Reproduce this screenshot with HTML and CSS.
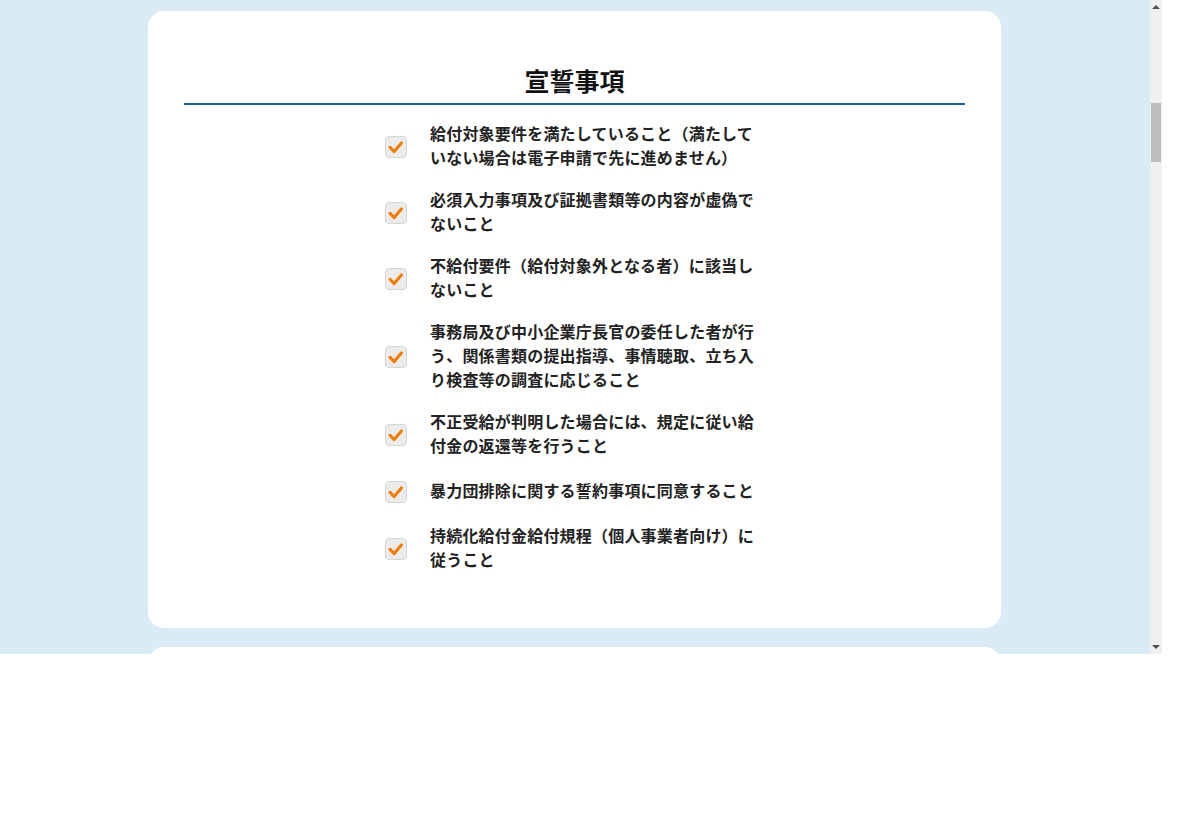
FILE: index.html
```html
<!DOCTYPE html>
<html lang="ja">
<head>
<meta charset="UTF-8" />
<meta name="viewport" content="width=device-width, initial-scale=1" />
<title>宣誓事項</title>
<link rel="stylesheet" href="styles.css">
</head>
<body>

<div class="window">
  <main class="viewport">
    <section class="card">
      <h2 class="card-title">宣誓事項</h2>

      <ul class="oath-list">
        <li class="oath-item">
          <span class="check"><svg viewBox="0 0 22 22" width="22" height="22"><path d="M4.5 11.5 L9 16 L17 6.5" /></svg></span>
          <span class="oath-text">給付対象要件を満たしていること（満たしていない場合は電子申請で先に進めません）</span>
        </li>
        <li class="oath-item">
          <span class="check"><svg viewBox="0 0 22 22" width="22" height="22"><path d="M4.5 11.5 L9 16 L17 6.5" /></svg></span>
          <span class="oath-text">必須入力事項及び証拠書類等の内容が虚偽でないこと</span>
        </li>
        <li class="oath-item">
          <span class="check"><svg viewBox="0 0 22 22" width="22" height="22"><path d="M4.5 11.5 L9 16 L17 6.5" /></svg></span>
          <span class="oath-text">不給付要件（給付対象外となる者）に該当しないこと</span>
        </li>
        <li class="oath-item">
          <span class="check"><svg viewBox="0 0 22 22" width="22" height="22"><path d="M4.5 11.5 L9 16 L17 6.5" /></svg></span>
          <span class="oath-text">事務局及び中小企業庁長官の委任した者が行う、関係書類の提出指導、事情聴取、立ち入り検査等の調査に応じること</span>
        </li>
        <li class="oath-item">
          <span class="check"><svg viewBox="0 0 22 22" width="22" height="22"><path d="M4.5 11.5 L9 16 L17 6.5" /></svg></span>
          <span class="oath-text">不正受給が判明した場合には、規定に従い給付金の返還等を行うこと</span>
        </li>
        <li class="oath-item">
          <span class="check"><svg viewBox="0 0 22 22" width="22" height="22"><path d="M4.5 11.5 L9 16 L17 6.5" /></svg></span>
          <span class="oath-text">暴力団排除に関する誓約事項に同意すること</span>
        </li>
        <li class="oath-item">
          <span class="check"><svg viewBox="0 0 22 22" width="22" height="22"><path d="M4.5 11.5 L9 16 L17 6.5" /></svg></span>
          <span class="oath-text">持続化給付金給付規程（個人事業者向け）に従うこと</span>
        </li>
      </ul>
    </section>

    <section class="card card-next"></section>
  </main>

  <div class="scrollbar">
    <span class="arrow arrow-up"></span>
    <span class="thumb"></span>
    <span class="arrow arrow-down"></span>
  </div>
</div>

</body>
</html>
```

FILE: styles.css
```css
body {
  margin: 0;
  background: #fff;
  font-family: "Noto Sans CJK JP", "Noto Sans", sans-serif;
  color: #222;
}
.window {
  display: flex;
  width: 1162px;
  height: 654px;
  overflow: hidden;
}
.viewport {
  flex: 1;
  background: #dbebf6;
  padding: 11px 1px 0 0;
  display: flex;
  flex-direction: column;
  align-items: center;
}
.card {
  width: 853px;
  box-sizing: border-box;
  flex-shrink: 0;
  background: #fff;
  border-radius: 16px;
  padding: 51px 36px 57px;
}
.card-next {
  margin-top: 19px;
  height: 200px;
}
.card-title {
  margin: 0;
  padding-bottom: 5px;
  border-bottom: 2px solid #1d5db0;
  text-align: center;
  font-size: 25px;
  line-height: 36px;
  font-weight: 700;
  color: #111;
}
.oath-list {
  list-style: none;
  width: 379px;
  margin: 0 auto;
  padding: 16px 0 0;
  display: flex;
  flex-direction: column;
  gap: 18px;
}
.oath-item {
  display: flex;
  align-items: center;
  gap: 23px;
  min-height: 30px;
}
.check {
  flex: none;
  width: 22px;
  height: 22px;
  margin-top: 3px;
  box-sizing: border-box;
  background: #ececec;
  border: 1px solid #d6d6d6;
  border-radius: 4px;
  display: flex;
  align-items: center;
  justify-content: center;
}
.check svg {
  display: block;
}
.check path {
  fill: none;
  stroke: #ee7d00;
  stroke-width: 3.4;
  stroke-linecap: round;
  stroke-linejoin: round;
}
.oath-text {
  flex: 1;
  font-size: 16px;
  line-height: 24px;
  font-weight: 700;
  letter-spacing: 0.2px;
}
.scrollbar {
  width: 12px;
  background: #f0f0f0;
  display: flex;
  flex-direction: column;
  align-items: center;
}
.arrow {
  width: 0;
  height: 0;
  border-left: 4px solid transparent;
  border-right: 4px solid transparent;
}
.arrow-up {
  margin-top: 5px;
  border-bottom: 4px solid #505050;
}
.arrow-down {
  margin-top: auto;
  margin-bottom: 5px;
  border-top: 4px solid #505050;
}
.thumb {
  width: 10px;
  height: 59px;
  margin-top: 94px;
  background: #bdbdbd;
}
```
